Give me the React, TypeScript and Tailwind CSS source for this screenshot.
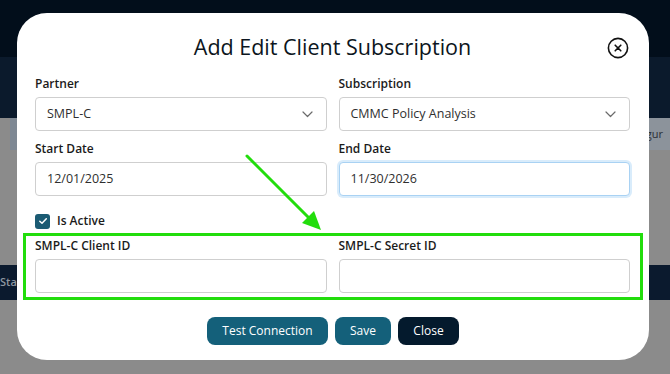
import React from "react";

const font = { fontFamily: '"Open Sans", "Noto Sans", sans-serif' };

function Chevron() {
  return (
    <svg width="11" height="7" viewBox="0 0 11 7" fill="none" className="shrink-0">
      <path d="M1 1l4.5 4.5L10 1" stroke="#6b6b6b" strokeWidth="1.2" strokeLinecap="round" strokeLinejoin="round" />
    </svg>
  );
}

function Field({ label, value, select, focus }: { label: string; value?: string; select?: boolean; focus?: boolean }) {
  return (
    <div className="flex flex-col">
      <div className="h-[16px] flex items-center text-[12px] font-semibold text-[#1b1b1b] leading-none">{label}</div>
      <div
        className={
          "mt-[5px] h-[34px] rounded-[4px] border bg-white flex items-center justify-between pl-[11px] pr-[13px] text-[12.5px] text-[#2f2f2f] " +
          (focus ? "border-[#a9d2f3] shadow-[0_0_0_2px_#d9ecfb]" : "border-[#cfcfcf]")
        }
      >
        <span>{value}</span>
        {select && <Chevron />}
      </div>
    </div>
  );
}

export default function App() {
  return (
    <div className="relative w-[670px] h-[374px] overflow-hidden bg-[#8b8b8b]" style={font}>
      {/* background page (dimmed) */}
      <div className="flex flex-col h-full">
        <div className="h-[57px] bg-[#020e1b]" />
        <div className="h-[61px] bg-[#0b1a2c]" />
        <div className="h-[32px] flex items-center">
          <div className="ml-[10px] w-[8px] h-full bg-[#7e8893]" />
          <div className="ml-auto w-[60px] h-full bg-[#8c939b] flex items-center pl-[33px] text-[11px] text-[#2b2f34]">igur</div>
        </div>
        <div className="h-[115px]" />
        <div className="h-[35px] bg-[#0b1a2e] flex items-center text-[11px] font-semibold text-[#8e96a0]">
          <span>Star</span>
        </div>
        <div className="flex-1" />
      </div>

      {/* modal */}
      <div className="absolute left-[17px] top-[13px] w-[632px] h-[347px] rounded-[30px] bg-white pl-[18px] pr-[19px] flex flex-col">
        <div className="h-[60px] pt-[20px] text-center text-[21.5px] font-medium leading-[28px] text-[#0c1520]">Add Edit Client Subscription</div>
        <button className="absolute left-[590px] top-[24px] w-[22px] h-[22px]">
          <svg width="22" height="22" viewBox="0 0 22 22" fill="none">
            <circle cx="11" cy="11" r="9.6" stroke="#111" strokeWidth="1.6" />
            <path d="M8.2 8.2l5.6 5.6M13.8 8.2l-5.6 5.6" stroke="#111" strokeWidth="1.6" strokeLinecap="round" />
          </svg>
        </button>

        <div className="mt-[3px] grid grid-cols-2 gap-x-[12px]">
          <Field label="Partner" value="SMPL-C" select />
          <Field label="Subscription" value="CMMC Policy Analysis" select />
        </div>
        <div className="mt-[10px] grid grid-cols-2 gap-x-[12px]">
          <Field label="Start Date" value="12/01/2025" />
          <Field label="End Date" value="11/30/2026" focus />
        </div>
        <div className="mt-[17px] h-[16px] flex items-center gap-[7px]">
          <div className="w-[15px] h-[15px] rounded-[3px] bg-[#1b5b73] flex items-center justify-center">
            <svg width="10" height="10" viewBox="0 0 10 10" fill="none">
              <path d="M1.8 5.2l2.2 2.1L8.3 2.8" stroke="#fff" strokeWidth="1.5" strokeLinecap="round" strokeLinejoin="round" />
            </svg>
          </div>
          <span className="text-[12px] font-semibold text-[#1b1b1b]">Is Active</span>
        </div>
        <div className="mt-[9px] grid grid-cols-2 gap-x-[12px]">
          <Field label="SMPL-C Client ID" />
          <Field label="SMPL-C Secret ID" />
        </div>
        <div className="mt-[24px] flex justify-center gap-[7px] pl-[1px]">
          <button className="h-[28px] w-[121px] rounded-[8px] bg-[#14607a] text-white text-[12px]">Test Connection</button>
          <button className="h-[28px] w-[56px] rounded-[8px] bg-[#14607a] text-white text-[12px]">Save</button>
          <button className="h-[28px] w-[61px] rounded-[8px] bg-[#041a2d] text-white text-[12px]">Close</button>
        </div>
      </div>

      {/* annotation overlay */}
      <div className="absolute left-[23px] top-[233px] w-[620px] h-[67px] border-[3px] border-[#22dd0c]" />
      <svg className="absolute left-0 top-0" width="670" height="374" viewBox="0 0 670 374" fill="none">
        <line x1="247" y1="156" x2="310" y2="219" stroke="#22dd0c" strokeWidth="3" strokeLinecap="round" />
        <polygon points="321,230 302,223 314,211" fill="#22dd0c" />
      </svg>
    </div>
  );
}
